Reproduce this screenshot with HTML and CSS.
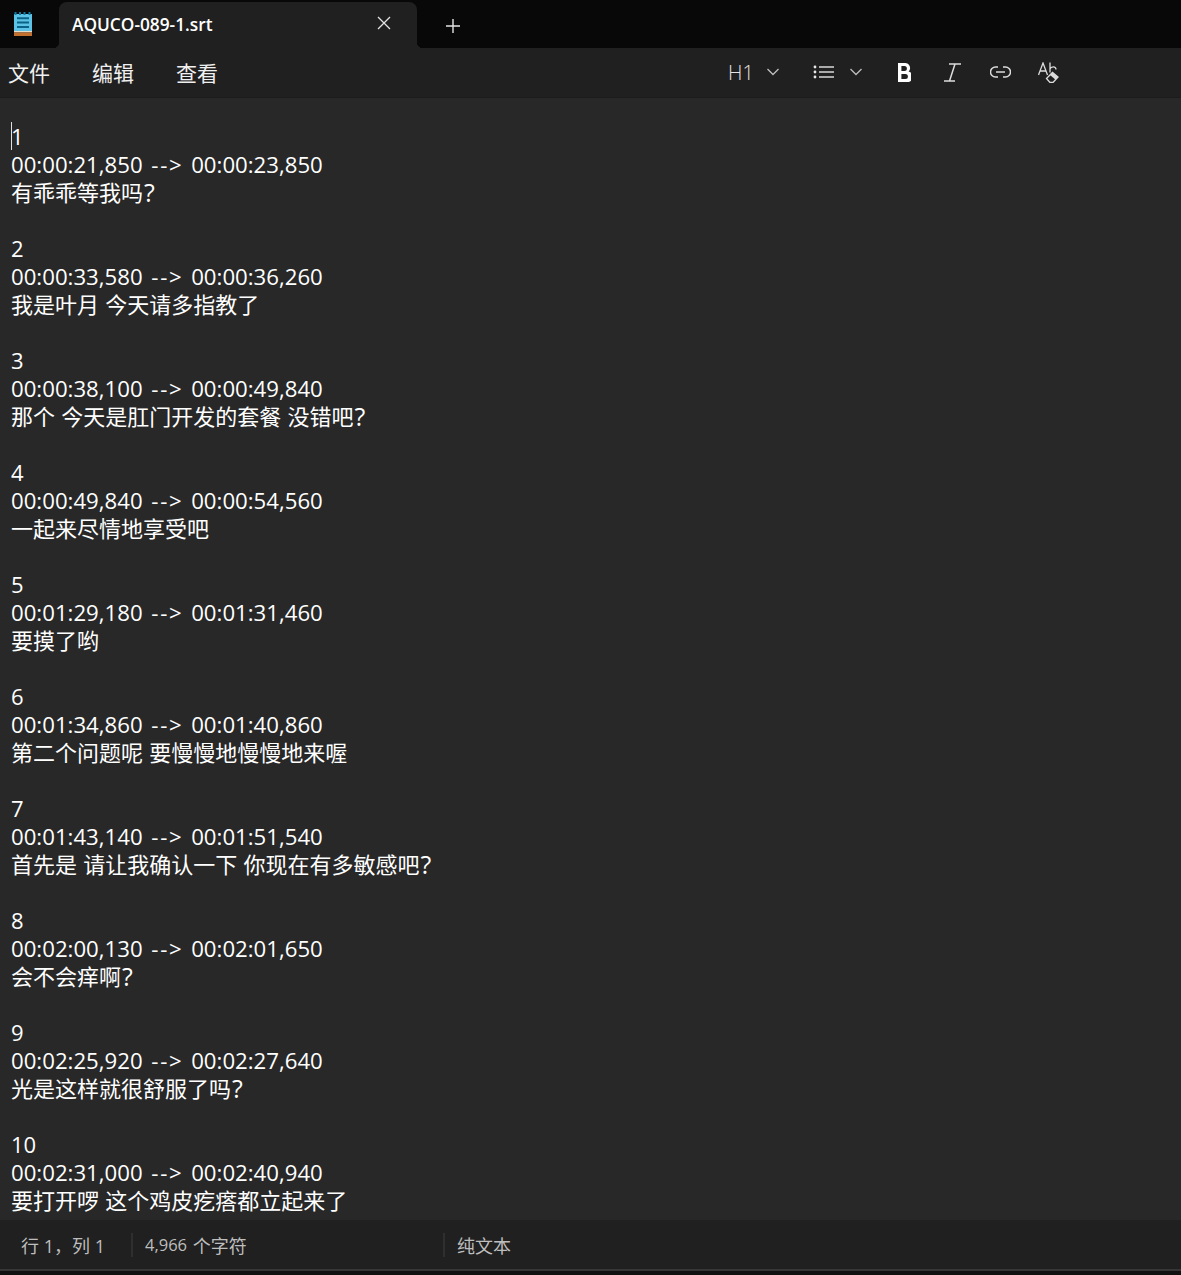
FILE: index.html
```html
<!DOCTYPE html>
<html lang="zh-CN">
<head>
<meta charset="utf-8">
<title>AQUCO-089-1.srt</title>
<link rel="stylesheet" href="styles.css">
</head>
<body>
<div class="app">
  <header class="titlebar">
    <div class="app-icon">
      <svg width="18" height="24" viewBox="0 0 18 24"><rect x="0" y="2" width="18" height="18" fill="#5cc2e6"/><rect x="0" y="19" width="18" height="1.500" fill="#e9dcc8"/><rect x="0" y="20.500" width="18" height="3.500" fill="#c4702e"/><path d="M1.500 0v3M6 0v3M10.500 0v3M15.500 0v3" stroke="#0f7ca6" stroke-width="2"/><path d="M3 6.300h12M3 10.600h12M3 15h12" stroke="#0b6488" stroke-width="2"/></svg>
    </div>
    <div class="tab">
      <span class="tab-title">AQUCO-089-1.srt</span>
      <svg class="tab-close" width="14" height="14" viewBox="0 0 14 14"><path d="M1 1l12 12M13 1L1 13" stroke="#e4e4e4" stroke-width="1.300"/></svg>
    </div>
    <svg class="tab-add" width="16" height="16" viewBox="0 0 16 16"><path d="M8 1v14M1 8h14" stroke="#e4e4e4" stroke-width="1.400"/></svg>
  </header>
  <nav class="toolbar">
    <div class="menu"><span>文件</span><span>编辑</span><span>查看</span></div>
    <div class="tools">
      <div class="tool-heading"><span class="h1">H1</span><svg class="chev" width="14" height="8" viewBox="0 0 14 8"><path d="M1.500 1l5.500 5.500L12.500 1" fill="none" stroke="#bdbdbd" stroke-width="1.300"/></svg></div>
      <div class="tool-list"><svg width="22" height="16" viewBox="0 0 22 16"><path d="M6 3h15M6 8h15M6 13h15" stroke="#d8d8d8" stroke-width="1.400"/><circle cx="2" cy="3" r="1.400" fill="#e8e8e8"/><circle cx="2" cy="8" r="1.400" fill="#e8e8e8"/><circle cx="2" cy="13" r="1.400" fill="#e8e8e8"/></svg><svg class="chev" width="14" height="8" viewBox="0 0 14 8"><path d="M1.500 1l5.500 5.500L12.500 1" fill="none" stroke="#bdbdbd" stroke-width="1.300"/></svg></div>
      <svg class="icon-bold" width="13" height="19" viewBox="0 0 13 19"><path fill-rule="evenodd" fill="#fff" d="M0 0h7a5 5 0 0 1 3.600 8.500A5.200 5.200 0 0 1 8 19H0zM3.400 3v5h3a2.500 2.500 0 0 0 0-5zM3.400 11v5h4a2.500 2.500 0 0 0 0-5z"/></svg>
      <svg class="icon-italic" width="17" height="19" viewBox="0 0 17 19"><path d="M5 1h12M0 18h11M11 1L5.500 18" fill="none" stroke="#dcdcdc" stroke-width="1.500"/></svg>
      <svg class="icon-link" width="21" height="12" viewBox="0 0 21 12"><path d="M8 1H5.500a5 5 0 0 0 0 10H8M13 1h2.500a5 5 0 0 1 0 10H13M6 6h9" fill="none" stroke="#dcdcdc" stroke-width="1.500"/></svg>
      <svg class="icon-clear" width="21" height="21" viewBox="0 0 21 21"><path d="M.500 13L5 1l4.500 12M2 9h6M12 .500v10M12 7c1-3 6-3 6 .500" fill="none" stroke="#dcdcdc" stroke-width="1.300"/><path d="M8.500 16.500l6-6 5.500 4.500-5 5.500h-3z" fill="#202020" stroke="#dcdcdc" stroke-width="1.300"/><path d="M12 13l2.600-2.500 5.400 4.500-2.400 2.700z" fill="#dcdcdc"/></svg>
    </div>
  </nav>
  <main class="editor">
    <span class="caret"></span>
    <pre class="content">1
<span class="time">00:00:21,850 <span class="arrow">--&gt;</span> 00:00:23,850</span>
有乖乖等我吗<span class="q">?</span>

2
<span class="time">00:00:33,580 <span class="arrow">--&gt;</span> 00:00:36,260</span>
我是叶月 今天请多指教了

3
<span class="time">00:00:38,100 <span class="arrow">--&gt;</span> 00:00:49,840</span>
那个 今天是肛门开发的套餐 没错吧<span class="q">?</span>

4
<span class="time">00:00:49,840 <span class="arrow">--&gt;</span> 00:00:54,560</span>
一起来尽情地享受吧

5
<span class="time">00:01:29,180 <span class="arrow">--&gt;</span> 00:01:31,460</span>
要摸了哟

6
<span class="time">00:01:34,860 <span class="arrow">--&gt;</span> 00:01:40,860</span>
第二个问题呢 要慢慢地慢慢地来喔

7
<span class="time">00:01:43,140 <span class="arrow">--&gt;</span> 00:01:51,540</span>
首先是 请让我确认一下 你现在有多敏感吧<span class="q">?</span>

8
<span class="time">00:02:00,130 <span class="arrow">--&gt;</span> 00:02:01,650</span>
会不会痒啊<span class="q">?</span>

9
<span class="time">00:02:25,920 <span class="arrow">--&gt;</span> 00:02:27,640</span>
光是这样就很舒服了吗<span class="q">?</span>

10
<span class="time">00:02:31,000 <span class="arrow">--&gt;</span> 00:02:40,940</span>
要打开啰 这个鸡皮疙瘩都立起来了</pre>
  </main>
  <footer class="statusbar">
    <span class="cell cell-pos">行 1，列 1</span>
    <span class="cell cell-count"><span class="num">4,966</span>&nbsp;个字符</span>
    <span class="cell cell-type">纯文本</span>
  </footer>
  <div class="window-edge"></div>
</div>
</body>
</html>
```
FILE: styles.css
```css
* { box-sizing: border-box; }
html, body { margin: 0; padding: 0; background: #282828; }
body { font-family: "Open Sans", "Noto Sans CJK SC", sans-serif; color: #fff; }
.app { width: 1181px; height: 1275px; display: flex; flex-direction: column; overflow: hidden; }
.titlebar { height: 48px; flex: none; background: #080808; display: flex; align-items: flex-end; }
.app-icon { width: 59px; height: 48px; padding: 12px 0 0 14px; }
.app-icon svg { display: block; }
.tab { position: relative; width: 358px; height: 46px; background: #202020; border-radius: 8px 8px 0 0; display: flex; align-items: center; justify-content: space-between; padding: 0 26px 4px 13px; }
.tab::before, .tab::after { content: ""; position: absolute; bottom: 0; width: 6px; height: 6px; }
.tab::before { left: -6px; background: radial-gradient(circle at 0 0, transparent 6px, #202020 6.500px); }
.tab::after { right: -6px; background: radial-gradient(circle at 100% 0, transparent 6px, #202020 6.500px); }
.tab-title { font-size: 17.300px; font-weight: 600; position: relative; top: 1px; }
.tab-add { margin: 0 0 14px 28px; }
.toolbar { height: 50px; flex: none; background: #202020; border-bottom: 1px solid #1c1c1c; display: flex; align-items: center; padding-bottom: 2px; }
.menu { width: 712px; display: flex; gap: 42px; padding-left: 8px; font-size: 21px; font-family: "Noto Sans CJK SC", sans-serif; color: #f0f0f0; }
.tools { display: flex; align-items: center; padding-top: 1px; }
.tool-heading { display: flex; align-items: center; gap: 12px; margin-left: 16px; width: 85px; }
.h1 { font-size: 20px; font-weight: 300; color: #e4e4e4; }
.tool-list { display: flex; align-items: center; gap: 14px; width: 85px; }
.icon-bold { margin-right: 33px; }
.icon-italic { margin-right: 29px; }
.icon-link { margin-right: 27px; }
.editor { flex: 1; min-height: 0; position: relative; padding: 24px 0 0 11px; background: #282828; overflow: hidden; }
.caret { position: absolute; left: 11px; top: 24px; width: 1px; height: 28px; background: #e0e0e0; }
.content { margin: 0; font-family: "Open Sans", "Noto Sans CJK SC", sans-serif; font-size: 22px; line-height: 28px; word-spacing: .5px; color: #fff; white-space: pre; }
.time { display: inline-block; vertical-align: top; height: 28px; padding-top: 1px; font-size: 22.200px; line-height: 28px; word-spacing: 2px; }
.arrow { letter-spacing: 1.700px; margin: 0 0 0 1px; }
.q { display: inline-block; vertical-align: top; font-size: 25px; line-height: 28px; margin-left: 1px; }
.statusbar { height: 49px; flex: none; background: #202020; display: flex; align-items: center; font-size: 18px; color: #bdbdbd; }
.window-edge { height: 6px; flex: none; background: #111; border-top: 2px solid #363636; }
.cell { display: flex; align-items: center; height: 24px; }
.cell-pos { width: 133px; padding-left: 21px; border-right: 2px solid #2f2f2f; white-space: pre; }
.cell-count { width: 312px; padding-left: 12px; border-right: 2px solid #2f2f2f; }
.num { font-size: 16.500px; margin-right: 1px; }
.cell-type { padding-left: 12px; }
```
